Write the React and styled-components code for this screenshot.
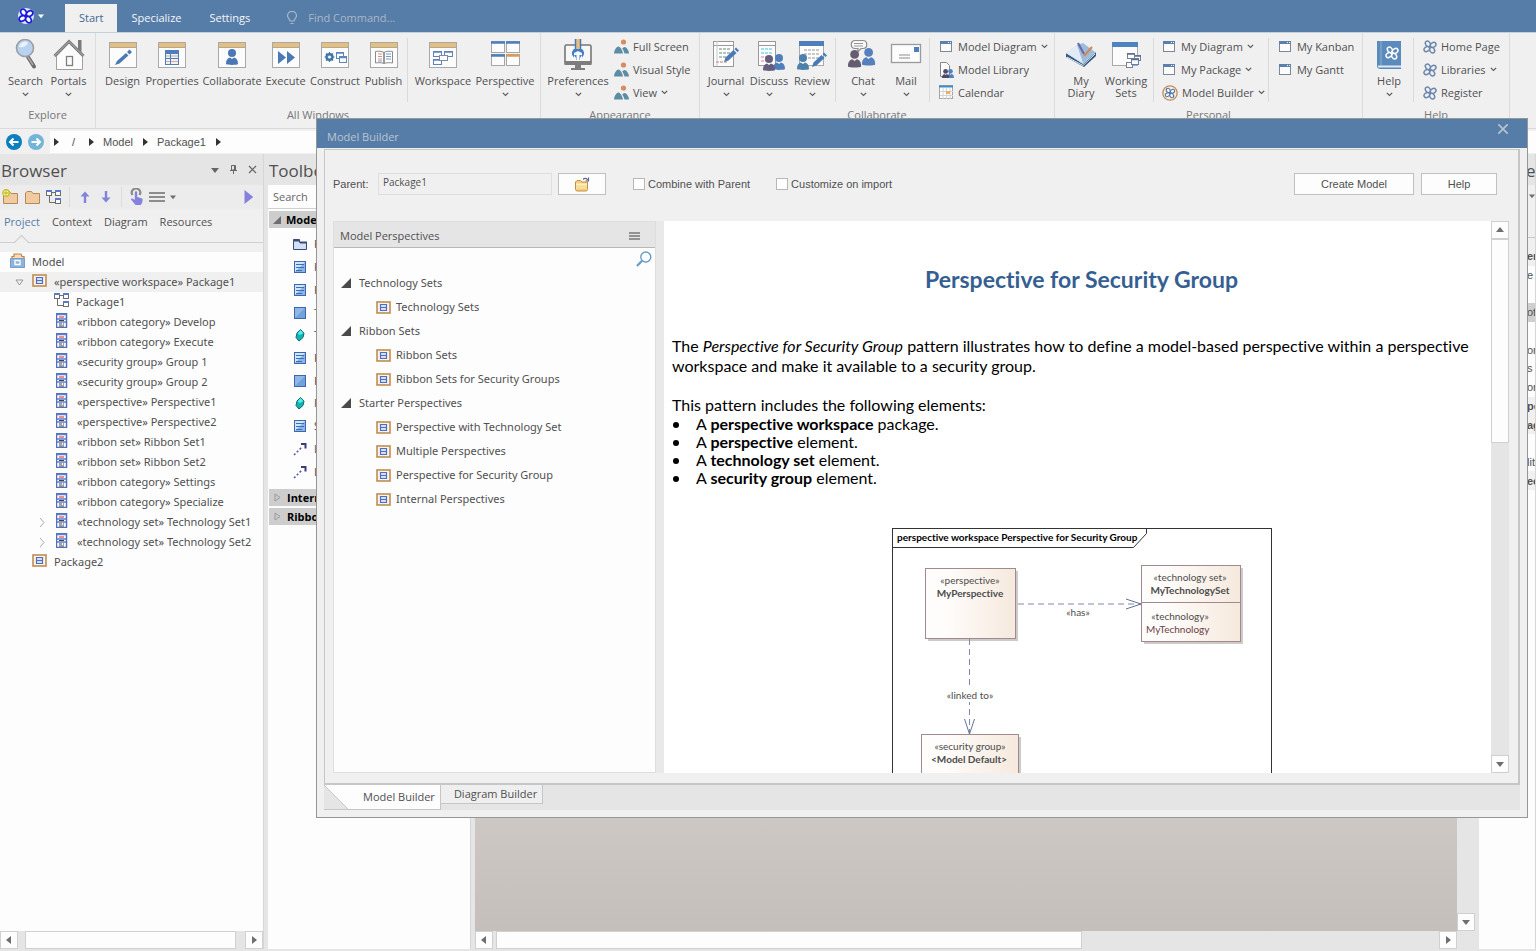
import React, { useState } from "react";
import styled, { createGlobalStyle, css } from "styled-components";

const GlobalStyle = createGlobalStyle`
  * {
    box-sizing: border-box;
  }
  body {
    margin: 0;
    background: #e5e5e5;
    color: #505050;
    font-family: "Open Sans", "Noto Sans", sans-serif;
    font-size: 11px;
    line-height: 14px;
    overflow: hidden;
  }
  button, input {
    font: inherit;
    color: inherit;
    margin: 0;
    padding: 0;
    border: 0;
    border-radius: 0;
    background: transparent;
  }
  button {
    cursor: pointer;
  }
  svg {
    display: block;
    flex: none;
  }
  ul {
    list-style: none;
    margin: 0;
    padding: 0;
  }
  h1, h2, p {
    margin: 0;
  }
`;

const Page = styled.div`
  display: flex;
  flex-direction: column;
  min-height: 100vh;
  white-space: nowrap;
  padding-bottom: 2px;
`;

/* title bar */

const TitleBar = styled.header`
  display: flex;
  align-items: flex-end;
  height: 33px;
  background: #567da7;
  border-bottom: 1px solid #c3d0de;
`;

const AppButton = styled.button`
  display: flex;
  align-items: center;
  gap: 4px;
  width: 65px;
  height: 32px;
  padding-left: 18px;
`;

const MainTab = styled.button`
  height: 28px;
  padding: 0 14px;
  color: #f4f7fa;
  ${({ $active }) =>
    $active &&
    css`
      background: #f0f0f0;
      color: #45688f;
    `}
`;

const MainTabs = styled.nav`
  display: flex;
`;

const FindBox = styled.label`
  display: flex;
  align-items: center;
  gap: 10px;
  height: 28px;
  margin-left: 22px;
`;

const FindInput = styled.input`
  width: 160px;
  outline: none;
  &::placeholder {
    color: #a9b7c7;
    opacity: 1;
  }
`;

/* ribbon */

const Ribbon = styled.div`
  display: flex;
  height: 96px;
  background: #f0f0f0;
  border-bottom: 1px solid #dadada;
`;

const Group = styled.section`
  display: flex;
  flex-direction: column;
  width: ${({ $width }) => $width}px;
  border-right: 1px solid #dcdcdc;
`;

const GroupBody = styled.div`
  display: flex;
  height: 75px;
  padding-left: ${({ $indent }) => $indent}px;
`;

const GroupLabel = styled.div`
  text-align: center;
  color: #777;
`;

const Divider = styled.div`
  width: 1px;
  height: 64px;
  margin: 5px 0 0 ${({ $before = 0 }) => $before}px;
  background: #dadada;
`;

const BigButton = styled.button`
  display: flex;
  flex-direction: column;
  align-items: center;
  width: ${({ $width }) => $width}px;
  padding-top: 6px;
  line-height: 12px;
`;

const BigLabel = styled.span`
  margin: 4px 0 5px;
`;

const SmallColumn = styled.div`
  display: flex;
  flex-direction: column;
  padding: 2px 0 0 ${({ $indent }) => $indent}px;
`;

const SmallButton = styled.button`
  display: flex;
  align-items: center;
  gap: 4px;
  height: 23px;
`;

/* breadcrumb */

const Crumbs = styled.nav`
  display: flex;
  align-items: center;
  gap: 6px;
  height: 25px;
  padding-left: 6px;
  background: #f0f0f0;
`;

const CrumbTrail = styled.div`
  display: flex;
  flex: 1;
  align-items: center;
  gap: 8px;
  height: 22px;
  padding-left: 2px;
  background: #fdfdfd;
  font-family: "Liberation Sans", Arial, sans-serif;
`;

const Crumb = styled.a`
  color: inherit;
  text-decoration: none;
`;

const RootCrumb = styled(Crumb)`
  padding: 0 4px;
`;

/* docked panels */

const Workspace = styled.main`
  display: flex;
  flex: 1;
  gap: 4px;
`;

const Panel = styled.section`
  display: flex;
  flex-direction: column;
  width: ${({ $width }) => $width}px;
  background: #fdfdfd;
  border-right: 1px solid #d6d6d6;
  overflow: hidden;
`;

const PanelHeader = styled.div`
  display: flex;
  align-items: center;
  gap: 10px;
  height: 31px;
  padding-right: 6px;
  background: #e5e5e5;
`;

const PanelTitle = styled.h2`
  flex: 1;
  padding: 2px 0 0 1px;
  font-size: 17px;
  font-weight: 400;
  line-height: 24px;
`;

const Toolbar = styled.div`
  display: flex;
  align-items: center;
  gap: 5px;
  height: 24px;
  padding: 0 8px 0 2px;
  background: #ececec;
`;

const ToolDivider = styled.div`
  width: 1px;
  height: 20px;
  margin: 0 2px;
  background: #dcdcdc;
`;

const Spacer = styled.div`
  flex: 1;
`;

const PanelTabs = styled.div`
  display: flex;
  gap: 12px;
  height: 34px;
  padding: 6px 0 0 4px;
  background: #f0f0f0;
  border-bottom: 1px solid #d0d0d0;
`;

const PanelTab = styled.button`
  position: relative;
  height: 14px;
  color: ${({ $active }) => ($active ? "#567da7" : "#505050")};
  ${({ $active }) =>
    $active &&
    css`
      &::after {
        content: "";
        position: absolute;
        left: 12px;
        top: 22px;
        width: 10px;
        height: 10px;
        border: solid #cacaca;
        border-width: 1px 0 0 1px;
        background: linear-gradient(135deg, #f0f0f0 50%, transparent 50%);
        transform: rotate(45deg);
      }
    `}
`;

const Tree = styled.ul`
  flex: 1;
  border-top: 9px solid #f0f0f0;
  font-family: "Noto Sans", "Open Sans", sans-serif;
`;

const TreeRow = styled.li`
  display: flex;
  align-items: center;
  height: 20px;
  padding-left: ${({ $indent }) => $indent}px;
  background: ${({ $selected }) => ($selected ? "#f0f0f0" : "transparent")};
`;

const TreeArrow = styled.span`
  display: flex;
  align-items: center;
  width: 17px;
`;

const TreeIcon = styled.span`
  width: ${({ $wide }) => ($wide ? 22 : 21)}px;
  padding-bottom: 4px;
`;

/* scroll bars */

const ScrollTrack = styled.div`
  display: flex;
  flex: none;
  background: #e5e5e5;
  ${({ $vertical }) =>
    $vertical
      ? css`
          flex-direction: column;
          width: 18px;
        `
      : css`
          height: 18px;
        `}
`;

const ScrollButton = styled.button`
  display: flex;
  flex: none;
  align-items: center;
  justify-content: center;
  width: 18px;
  height: 18px;
  background: #fdfdfd;
  border: 1px solid #d0d0d0;
`;

const ScrollThumb = styled.div`
  flex: ${({ $size }) => $size};
  background: #fdfdfd;
  border: 1px solid #d0d0d0;
`;

const ScrollGap = styled.div`
  flex: ${({ $size }) => $size};
`;

/* toolbox */

const ToolboxSearch = styled.input`
  height: 24px;
  padding-left: 5px;
  background: #fdfdfd;
  border-bottom: 1px solid #d0d0d0;
  &::placeholder {
    color: #666;
    opacity: 1;
  }
`;

const ToolSection = styled.div`
  display: flex;
  align-items: center;
  gap: 5px;
  height: 17px;
  margin: 2px 0 0 1px;
  padding-left: 4px;
  background: #cdcdcd;
  color: #000;
  font-weight: 700;
`;

const ToolItems = styled.ul`
  display: grid;
  grid-auto-rows: 1fr;
  height: 250px;
  margin: 5px 0 4px;
  padding-left: 25px;
`;

const ToolItem = styled.li`
  display: flex;
  align-items: center;
  gap: 7px;
`;

/* diagram canvas */

const CanvasArea = styled.section`
  display: flex;
  flex: 1;
  flex-direction: column;
`;

const CanvasRow = styled.div`
  display: flex;
  flex: 1;
`;

const Canvas = styled.div`
  flex: 1;
  background: linear-gradient(#fbfaf9, #c5bfbb);
`;

const CanvasScroll = styled(ScrollTrack)`
  padding-right: 18px;
`;

/* element list at the right edge */

const SideHeader = styled(PanelHeader)`
  padding: 0 0 0 46px;
`;

const SideTools = styled.div`
  height: 53px;
  padding: 8px 0 0 50px;
  background: #f0f0f0;
  border-bottom: 1px solid #c8c8c8;
`;

const SideGap = styled.div`
  height: 9px;
  background: #f0f0f0;
`;

const SideRows = styled.ul`
  display: grid;
  grid-auto-rows: 1fr;
  height: 243px;
  font-family: "Liberation Sans", Arial, sans-serif;
`;

const SideRow = styled.li`
  display: flex;
  align-items: center;
  padding-left: 48px;
  background: ${({ $fill = "transparent" }) => $fill};
  font-weight: ${({ $bold }) => ($bold ? 700 : 400)};
`;

/* model builder dialog */

const Dialog = styled.section`
  position: fixed;
  inset: 118px 8px 133px 316px;
  display: flex;
  flex-direction: column;
  background: #f0f0f0;
  border: 1px solid #969696;
`;

const DialogTitle = styled.div`
  display: flex;
  flex: none;
  align-items: flex-start;
  justify-content: space-between;
  height: 29px;
  padding: 4px 18px 0 10px;
  background: #567da7;
`;

const DialogName = styled.h2`
  padding-top: 7px;
  color: #b9c4d1;
  font-size: 11px;
  font-weight: 400;
  line-height: 14px;
`;

const DialogBody = styled.div`
  display: flex;
  flex: 1;
  flex-direction: column;
  min-height: 0;
  margin: 1px 7px 0;
  padding: 23px 9px 10px 8px;
  border: solid #c6c6c6;
  border-width: 1px 2px 2px 1px;
`;

const Form = styled.form`
  display: flex;
  align-items: center;
  height: 22px;
  margin-bottom: 26px;
  font-family: "Liberation Sans", Arial, sans-serif;
`;

const ParentLabel = styled.label`
  width: 45px;
`;

const ParentInput = styled.input`
  width: 174px;
  height: 22px;
  padding: 0 0 4px 4px;
  border: 1px solid #dedede;
  font-family: "Open Sans", sans-serif;
  font-size: 10px;
`;

const FormButton = styled.button`
  display: flex;
  align-items: center;
  justify-content: center;
  width: ${({ $width }) => $width}px;
  height: 22px;
  background: #fdfdfd;
  border: 1px solid #c0c0c0;
`;

const BrowseButton = styled(FormButton)`
  margin: 0 27px 0 6px;
`;

const Check = styled.label`
  display: flex;
  align-items: center;
  gap: 3px;
  margin-right: 26px;
`;

const CheckBox = styled.input`
  appearance: none;
  width: 12px;
  height: 12px;
  background: #fff;
  border: 1px solid #b8b8b8;
  &:checked {
    background: #567da7;
  }
`;

const FormActions = styled.div`
  display: flex;
  gap: 7px;
  margin-left: auto;
  padding-right: 12px;
`;

const Split = styled.div`
  display: flex;
  flex: 1;
  min-height: 0;
`;

const Perspectives = styled.section`
  flex: none;
  width: 323px;
  background: #fdfdfd;
  border: 1px solid #dedede;
`;

const PerspectivesHeader = styled.div`
  display: flex;
  align-items: center;
  justify-content: space-between;
  height: 26px;
  padding: 2px 15px 0 6px;
  background: #e5e5e5;
  border-bottom: 1px solid #b8b8b8;
`;

const PerspectiveSearch = styled.button`
  display: block;
  margin: 3px 3px 4px auto;
`;

const PerspectiveList = styled.ul`
  font-family: "Noto Sans", "Open Sans", sans-serif;
`;

const PerspectiveRow = styled.li`
  display: flex;
  align-items: center;
  gap: ${({ $leaf }) => ($leaf ? 4 : 8)}px;
  height: 24px;
  padding-left: ${({ $leaf }) => ($leaf ? 42 : 7)}px;
`;

const SplitHandle = styled.div`
  width: 8px;
  background: #e9e9e9;
`;

const Doc = styled.article`
  flex: 1;
  min-width: 0;
  padding: 43px 0 0 8px;
  overflow: hidden;
  background: #fff;
  color: #000;
  font-family: Lato, sans-serif;
  font-size: 16px;
  font-variant-ligatures: none;
  line-height: 20px;
  white-space: normal;
`;

const DocTitle = styled.h1`
  margin-bottom: 42px;
  color: #365f91;
  font-size: 23px;
  font-weight: 700;
  line-height: 30px;
  text-align: center;
`;

const Paragraph = styled.p`
  padding-right: 8px;
  margin-bottom: 19px;
`;

const BulletLead = styled.p`
  line-height: 20px;
`;

const Bullets = styled.ul`
  margin-bottom: 41px;
  line-height: 18px;
`;

const Bullet = styled.li`
  display: flex;
  &::before {
    content: "";
    width: 6px;
    height: 6px;
    margin: 7px 17px 0 1px;
    border-radius: 50%;
    background: #000;
  }
`;

const DiagramFrame = styled.div`
  display: flex;
  justify-content: center;
`;

const TabStrip = styled.div`
  display: flex;
  flex: none;
  align-items: flex-start;
  height: 25px;
  margin: 0 7px 7px;
  background: #e5e5e5;
`;

const ActiveTab = styled.button`
  display: flex;
  height: 25px;
  padding-right: 5px;
  align-items: center;
  background: #fdfdfd;
  border: solid #c6c6c6;
  border-width: 0 1px 1px 0;
  &::before {
    content: "";
    width: 24px;
    height: 24px;
    margin-right: 15px;
    background: linear-gradient(45deg, #e5e5e5 49%, #c6c6c6 49% 52%, #fdfdfd 52%);
  }
`;

const OtherTab = styled.button`
  height: 19px;
  padding: 0 5px 0 13px;
  border: solid #c6c6c6;
  border-width: 0 1px 1px 0;
  background: #efefef;
`;

/* icons */

const Triangle = ({ dir = "down", color = "#6e6e6e", size = 8 }) => {
  const shapes = {
    down: "M0 2h8L4 7z",
    up: "M0 6h8L4 1z",
    left: "M6 0v8L1 4z",
    right: "M2 0v8l5-4z",
    corner: "M8 0v8H0z",
  };
  return (
    <svg width={size} height={size} viewBox="0 0 8 8">
      <path d={shapes[dir]} fill={color} />
    </svg>
  );
};

const HollowTriangle = ({ dir = "right" }) => (
  <svg width="9" height="9" viewBox="0 0 9 9" fill="none" stroke="#999">
    <path d={dir === "down" ? "M1 2h7L4.500 7z" : "M2 1v7l5-3.500z"} />
  </svg>
);

const Chevron = () => (
  <svg width="7" height="5" viewBox="0 0 7 5" fill="none" stroke="#5c5c5c" strokeWidth="1.200">
    <path d="M.8.8l2.700 2.700L6.200.8" />
  </svg>
);

const ChevronRight = () => (
  <svg width="7" height="11" viewBox="0 0 7 11" fill="none" stroke="#aaa">
    <path d="M1 1l4 4.500L1 10" />
  </svg>
);

const Knot = ({ size = 14, back = "none", color = "#6c87ad", hole = "#f0f0f0" }) => (
  <svg width={size} height={size} viewBox="0 0 16 16">
    <circle cx="8" cy="8" r="8" fill={back} />
    <g fill={hole} stroke={color} strokeWidth="1.700">
      <ellipse cx="5.600" cy="4.400" rx="3.400" ry="2.600" transform="rotate(56 5.600 4.400)" />
      <ellipse cx="11.600" cy="5.600" rx="3.400" ry="2.600" transform="rotate(146 11.600 5.600)" />
      <ellipse cx="10.400" cy="11.600" rx="3.400" ry="2.600" transform="rotate(56 10.400 11.600)" />
      <ellipse cx="4.400" cy="10.400" rx="3.400" ry="2.600" transform="rotate(146 4.400 10.400)" />
    </g>
    <circle cx="8" cy="8" r="1.500" fill={color} />
  </svg>
);

const Big = ({ children }) => (
  <svg width="32" height="32" viewBox="0 0 32 32" fill="none">
    {children}
  </svg>
);

const WindowIcon = ({ children }) => (
  <Big>
    <rect x="2.500" y="3.500" width="27" height="25" fill="#fcfcfc" stroke="#a9a9a9" />
    <rect x="3" y="4" width="26" height="4" fill="#e3c081" />
    <path d="M3 8.500h26" stroke="#b9a98a" />
    {children}
  </Big>
);

const Person = ({ x = 0, y = 0, color = "#4a78b5" }) => (
  <g transform={`translate(${x} ${y})`} fill={color}>
    <circle cx="6" cy="4" r="4" />
    <path d="M0 15c0-4 1.500-6 4-6.500l2 1.500 2-1.500c2.500.5 4 2.500 4 6.500-1 1.200-11 1.200-12 0z" />
  </g>
);

const Pen = ({ x = 0, y = 0 }) => (
  <g transform={`translate(${x} ${y})`}>
    <path d="M0 15l1.500-4.500L9.500 3l3 3-8 7.500z" fill="#4a7ab5" />
    <path d="M10.500 2l1.500-1.500 3 3L13.500 5z" fill="#4a7ab5" />
  </g>
);

const SearchIcon = () => (
  <Big>
    <path d="M18 18l6 9.500" stroke="#6c6c6c" strokeWidth="4" strokeLinecap="round" />
    <path d="M18 18l5 8" stroke="#a8a8a8" strokeWidth="1.500" />
    <circle cx="15" cy="9" r="8.500" fill="#b9d2f0" stroke="#9a9fa6" strokeWidth="1.600" />
    <path d="M9 8a6.500 6.500 0 0 1 9-5c-1 4-4 6-9 5z" fill="#e9f2fc" />
  </Big>
);

const HomeIcon = () => (
  <Big>
    <path d="M3.500 17v13.500h26V17L16 4z" fill="#fcfcfc" stroke="#a0a0a0" />
    <path d="M25 1h3.500v12L25 10z" fill="#7a7a7a" />
    <path d="M1.500 17L16 2.500 30.500 17" stroke="#787878" strokeWidth="3" />
    <path d="M1.500 17L16 2.500 30.500 17" stroke="#b5b5b5" />
    <rect x="13.500" y="17.500" width="6" height="9" fill="#fcfcfc" stroke="#808080" strokeWidth="1.300" />
  </Big>
);

const DesignIcon = () => (
  <WindowIcon>
    <path d="M8 26l2-4 9-8 2.500 2.500-9 8zM20 13l2.500-2.500 2.500 2.500-2.500 2.500z" fill="#4a7ab5" />
  </WindowIcon>
);

const PropertiesIcon = () => (
  <WindowIcon>
    <rect x="9" y="11" width="14" height="15" fill="#4f7fbb" />
    <path d="M10 15h4v4h-4zM15 15h7v4h-7zM10 20h4v5h-4zM15 20h7v5h-7z" fill="#f5f0f0" />
    <path d="M15 17h7M10 17h4M10 22.500h4" stroke="#a9b4bf" />
    <path d="M15 22.500h7" stroke="#d8a9a0" />
  </WindowIcon>
);

const CollaborateIcon = () => (
  <WindowIcon>
    <Person x={10} y={10} />
  </WindowIcon>
);

const ExecuteIcon = () => (
  <WindowIcon>
    <path d="M8 12v13l8-6.500zM17 12v13l8-6.500z" fill="#4a7ab5" />
  </WindowIcon>
);

const ConstructIcon = () => (
  <WindowIcon>
    <circle cx="10.500" cy="18" r="3" stroke="#3f76a8" strokeWidth="2.200" />
    <path d="M10.500 13v10M5.500 18h10M7 14.500l7 7M14 14.500l-7 7" stroke="#3f76a8" strokeWidth="1.200" />
    <circle cx="10.500" cy="18" r="1.500" fill="#fcfcfc" />
    <rect x="17.500" y="13.500" width="7" height="6" fill="#fff" stroke="#5f86b8" />
    <rect x="20.500" y="17.500" width="7" height="6" fill="#fff" stroke="#5f86b8" />
    <path d="M17 14h8M20 18.500h8" stroke="#5f86b8" strokeWidth="1.500" />
  </WindowIcon>
);

const PublishIcon = () => (
  <WindowIcon>
    <path d="M7.500 12.500c3-.5 6-.5 8.500 1 2.500-1.500 5.500-1.500 8.500-1v11.500c-3-.5-6-.5-8.500.5-2.500-1-5.500-1-8.500-.5z" fill="#fff" stroke="#8b8b8b" />
    <path d="M16 13.500V24" stroke="#777" strokeWidth="1.500" />
    <path d="M10 15h4M10 17.500h4M10 20h4" stroke="#d88c7d" />
    <path d="M18 15h5M18 17.500h5M18 20h5M10 22h4" stroke="#6f9cd2" />
  </WindowIcon>
);

const WorkspaceIcon = () => (
  <WindowIcon>
    <g fill="#fff" stroke="#5c84bb">
      <rect x="6.500" y="12.500" width="8" height="5" />
      <rect x="17.500" y="12.500" width="8" height="5" />
      <rect x="6.500" y="20.500" width="8" height="5" />
      <rect x="12.500" y="16.500" width="8" height="5" stroke="#808aa0" />
    </g>
    <path d="M6 13h9M17 13h9M6 21h6" stroke="#5c84bb" strokeWidth="1.500" />
  </WindowIcon>
);

const PerspectiveIcon = () => (
  <Big>
    <g fill="#fcfcfc" stroke="#a6a6a6">
      <rect x="2.500" y="2.500" width="13" height="11" />
      <rect x="17.500" y="2.500" width="13" height="11" />
      <rect x="2.500" y="15.500" width="13" height="11" />
      <rect x="17.500" y="15.500" width="13" height="11" />
    </g>
    <path d="M2 3.500h14M17 3.500h14M2 16.500h14" stroke="#4f7fbb" strokeWidth="2.500" />
    <path d="M17 16.500h14" stroke="#d99a60" strokeWidth="2.500" />
  </Big>
);

const PreferencesIcon = () => (
  <Big>
    <rect x="3" y="6" width="26" height="19" rx="1.500" fill="#f7f7f7" stroke="#777" strokeWidth="1.600" />
    <path d="M2.500 22h27v4h-27zM13 26h6v3h4v2H9v-2h4z" fill="#7d7d7d" />
    <path d="M14 0h4v10h-4z" fill="#e3c081" />
    <path d="M13.500 0v12M18.500 0v12" stroke="#4a7ab5" strokeWidth="1.500" />
    <path d="M12 10h8c3 3 2.500 6 0 8.500v-4.500l-4-2-4 2v4.500c-2.500-2.500-3-5.500 0-8.500z" fill="#3f7fc6" />
    <path d="M12 16h8l-2 3v2h-4v-2z" fill="#3f7fc6" />
    <path d="M14.500 22v-7h3v7z" fill="#fbfbfb" />
  </Big>
);

const PictureIcon = () => (
  <svg width="15" height="15" viewBox="0 0 15 15">
    <circle cx="9.500" cy="3" r="2.600" fill="#d58d61" />
    <path d="M0 14.500c0-3 2.300-7 4.300-7s3.700 3 4.700 7z" fill="#5d8da6" />
    <path d="M8.200 9.500C9 8.500 9.800 8 10.500 8c2 0 4.500 3.500 4.500 6.500h-4.500c-.5-2-1.300-3.700-2.300-5z" fill="#5d8da6" />
  </svg>
);

const Lines = ({ x, y, w, colors, step = 4 }) =>
  colors.map((c, i) => (
    <path key={i} d={`M${x} ${y + i * step}h${w}`} stroke={c} strokeWidth="1.500" strokeDasharray="3 1" />
  ));

const JournalIcon = () => (
  <Big>
    <rect x="3.500" y="2.500" width="20" height="25" fill="#fcfcfc" stroke="#999" />
    <path d="M4 6.500h19" stroke="#999" />
    <path d="M7 2v25" stroke="#c9c9c9" />
    <Lines x={9} y={10} w={11} colors={["#9ab0a4", "#9ab0a4", "#9ab0a4"]} />
    <Lines x={6} y={23} w={12} colors={["#d6a49c"]} />
    <Pen x={14} y={8} />
  </Big>
);

const DiscussIcon = () => (
  <Big>
    <rect x="5.500" y="2.500" width="17" height="24" fill="#fcfcfc" stroke="#999" />
    <path d="M6 6.500h16" stroke="#999" />
    <Lines x={8} y={10} w={12} colors={["#7bdcea", "#7bdcea"]} />
    <Lines x={8} y={18} w={5} colors={["#e6a7cd", "#e6a7cd"]} />
    <Person x={20} y={15} color="#4f7fbb" />
    <Person x={10} y={16} color="#665c7d" />
  </Big>
);

const ReviewIcon = () => (
  <Big>
    <rect x="3.500" y="2.500" width="24" height="24" fill="#fcfcfc" stroke="#aaa" />
    <path d="M3 4.500h25" stroke="#4f7fbb" strokeWidth="5" />
    <Lines x={8} y={11} w={16} colors={["#b8b8b8", "#b8b8b8", "#b8b8b8"]} />
    <Person x={1} y={15} color="#4d80ab" />
    <Pen x={16} y={13} />
  </Big>
);

const ChatIcon = () => (
  <Big>
    <path d="M8 1.500h8c5 0 5 8 0 8h-2l-3 3v-3H8c-5 0-5-8 0-8z" fill="#f7f7f7" stroke="#8e8e8e" strokeWidth="1.200" />
    <path d="M7 4.500h9M7 7h9" stroke="#999" />
    <g transform="translate(1 11) scale(1.100)">
      <Person color="#665c70" />
    </g>
    <g transform="translate(15 9) scale(1.100)">
      <Person color="#567fbd" />
    </g>
  </Big>
);

const MailIcon = () => (
  <Big>
    <rect x="1.500" y="5.500" width="29" height="18" fill="#fcfcfc" stroke="#9a9a9a" strokeWidth="1.300" />
    <rect x="24" y="8" width="5" height="5" fill="#4f7fbb" />
    <path d="M9 16h11M9 19h11" stroke="#8d8d8d" />
  </Big>
);

const DiaryIcon = () => (
  <Big>
    <path d="M1 14l17 11 13-12v4L19 28 1 18z" fill="#37597f" />
    <path d="M2 18l16 8.500L30 15" stroke="#dce8f4" />
    <path d="M1 14l10-7 5 4 15 2-13 12z" fill="#b7cfe6" />
    <path d="M1 14l11-8 7 8-1 10z" fill="#e2ecf6" />
    <path d="M12 6l6-2 12 9-12 11z" fill="#9dbbdb" />
    <path d="M13 4l6 11" stroke="#6e65a5" strokeWidth="2" />
    <path d="M27 8l-8 9" stroke="#d08a58" strokeWidth="2.200" />
  </Big>
);

const WorkingSetsIcon = () => (
  <Big>
    <rect x="2.500" y="3.500" width="25" height="23" fill="#fcfcfc" stroke="#aaa" />
    <path d="M2 5.500h26" stroke="#4f83bf" strokeWidth="5" />
    <g fill="#fff" stroke="#7d7d90">
      <rect x="17.500" y="14.500" width="7" height="5" />
      <rect x="24.500" y="16.500" width="6" height="5" />
      <rect x="16.500" y="23.500" width="6" height="5" />
      <rect x="21.500" y="19.500" width="7" height="6" stroke="#5c84bb" />
    </g>
    <path d="M17 15h8M25 17h6M21 20.500h8" stroke="#5c6c94" strokeWidth="1.500" />
  </Big>
);

const HelpIcon = () => (
  <Big>
    <path d="M4 2h24v28H8c-3 0-4-1-4-3z" fill="#5b8abc" />
    <path d="M8 2v25" stroke="#8fb0d4" />
    <path d="M5 27.500h23" stroke="#dfeaf5" strokeWidth="2" />
    <g transform="translate(12 7)">
      <Knot size={14} color="#fff" hole="#5b8abc" />
    </g>
  </Big>
);

const SmallWindow = () => (
  <svg width="15" height="15" viewBox="0 0 15 15">
    <rect x="1.500" y="2.500" width="11" height="10" fill="#fcfcfc" stroke="#7e8796" />
    <path d="M1 3.500h12" stroke="#5c80ae" strokeWidth="3" />
    <path d="M9 3.500h1M11 3.500h1" stroke="#fff" />
  </svg>
);

const LibraryIcon = () => (
  <svg width="15" height="16" viewBox="0 0 15 16">
    <path d="M1.500.5h6l3 3v11h-9z" fill="#fcfcfc" stroke="#888" />
    <g transform="translate(8 7) scale(.58)">
      <Person color="#567fbd" />
    </g>
    <g transform="translate(3 7) scale(.6)">
      <Person color="#4f4a68" />
    </g>
  </svg>
);

const CalendarIcon = () => (
  <svg width="15" height="15" viewBox="0 0 15 15">
    <rect x=".5" y=".5" width="13" height="13" fill="#fdfdfd" stroke="#a5a5a5" />
    <path d="M0 1.500h14" stroke="#3b8fc4" strokeWidth="2" />
    <path d="M4 3v11M7.500 3v11M11 3v11M1 6.500h13M1 10.500h13" stroke="#d0d5da" />
    <rect x="7" y="6" width="4" height="3" fill="#f3ad62" />
  </svg>
);

const BuilderIcon = () => (
  <svg width="16" height="16" viewBox="0 0 16 16">
    <circle cx="8" cy="8" r="7.200" fill="#f7e9d6" stroke="#bf8f5a" strokeWidth="1.300" />
    <g transform="translate(2.500 2.500)">
      <Knot size={11} color="#4f78ae" hole="#f7f7f7" />
    </g>
  </svg>
);

const Bulb = () => (
  <svg width="12" height="14" viewBox="0 0 12 14" fill="none" stroke="#a9b7c7" strokeWidth="1.200">
    <path d="M4 10C4 8 1.500 7 1.500 4.800a4.400 4.400 0 0 1 9 0C10.500 7 8 8 8 10zM4.500 12.500h3" />
  </svg>
);

const RoundArrow = ({ dir, color }) => (
  <svg width="16" height="16" viewBox="0 0 16 16">
    <circle cx="8" cy="8" r="8" fill={color} />
    <g fill="none" stroke="#fff" strokeWidth="2" transform={dir === "right" ? "rotate(180 8 8)" : undefined}>
      <path d="M12.500 8H4.500M7.500 4.500L4 8l3.500 3.500" />
    </g>
  </svg>
);

const Pin = () => (
  <svg width="9" height="9" viewBox="0 0 9 9" fill="none" stroke="#666">
    <path d="M2.500.5h4v4.500h-4zM1 5.500h7M4.500 5.500V9M5.500 1v4" />
  </svg>
);

const Cross = ({ size = 9, color = "#666" }) => (
  <svg width={size} height={size} viewBox="0 0 9 9" stroke={color} strokeWidth="1.200">
    <path d="M1 1l7 7M8 1L1 8" />
  </svg>
);

const Folder = ({ isNew }) => (
  <svg width="17" height="16" viewBox="0 0 17 16">
    <path d="M1.500 14.500V4L3 2.500h4.500L9 4.500h6.500v10z" fill="#f0cba0" stroke="#b98955" />
    {isNew && (
      <g>
        <circle cx="4" cy="4" r="3.200" fill="#fff" stroke="#c9bf1f" strokeWidth="1.400" />
        <path d="M4 1.500v5M1.500 4h5" stroke="#c9bf1f" strokeWidth="1.300" />
      </g>
    )}
  </svg>
);

const StructureIcon = () => (
  <svg width="16" height="16" viewBox="0 0 16 16" fill="#fcfcfc" stroke="#6d6d6d">
    <path d="M3.500 6v7.500h6M6 3.500h4" fill="none" />
    <rect x=".5" y="1.500" width="5" height="5" />
    <rect x="9.500" y="1.500" width="5" height="5" />
    <rect x="9.500" y="9.500" width="5" height="5" />
    <path d="M0 2h6M9 2h6M9 10h6" stroke="#5c78c8" strokeWidth="2" />
  </svg>
);

const MoveArrow = ({ down }) => (
  <svg width="16" height="16" viewBox="0 0 16 16">
    <g transform={down ? "rotate(180 8 8)" : undefined}>
      <path d="M8 2.500l4.500 5H9.200V14H6.800V7.500H3.500z" fill="#8482dc" />
    </g>
  </svg>
);

const TouchIcon = () => (
  <svg width="15" height="18" viewBox="0 0 15 18">
    <path d="M3.500 7a4.200 4.200 0 1 1 7 0" fill="none" stroke="#8a8a8a" strokeWidth="2.200" />
    <path d="M5.800 4.500c0-1.800 2.400-1.800 2.400 0V9l5 1.500c1 .5 0 6-1.700 6.500H6.500L2 11.500c0-1.500 1.500-1.500 3.800.5z" fill="#8482dc" />
  </svg>
);

const MenuIcon = ({ width = 16, color = "#6e6e6e" }) => (
  <svg width={width} height="12" viewBox={`0 0 ${width} 12`} stroke={color} strokeWidth="1.600">
    <path
      d={width > 12 ? `M0 2h${width}M0 6h${width}M0 10h${width}` : `M0 3h${width}M0 6h${width}M0 9h${width}`}
    />
  </svg>
);

const ModelIcon = () => (
  <svg width="16" height="15" viewBox="0 0 16 15">
    <path d="M2 6V3.500h2V1h7l1 2.500h2V6" fill="#f7dcbc" stroke="#bd8446" strokeWidth="1.200" />
    <path d="M.5 5.500h14v9H.5z" fill="#8db4dd" stroke="#7b9cc3" />
    <path d="M5 7.500h5v4H5z" fill="none" stroke="#fff" strokeWidth="1.300" />
  </svg>
);

const PackageIcon = () => (
  <svg width="16" height="13" viewBox="0 0 16 13">
    <rect x="1" y="1" width="13" height="11" fill="#faf4ec" stroke="#c08d51" strokeWidth="1.600" />
    <path d="M4.500 3.500h6v6h-6zM4.500 6.500h6" fill="#d6e0f8" stroke="#4f6fc0" strokeWidth="1.200" />
  </svg>
);

const ElementIcon = () => (
  <svg width="12" height="15" viewBox="0 0 12 15">
    <rect x=".5" y=".5" width="10" height="14" fill="#fff" stroke="#5270bd" strokeWidth="1.500" />
    <path d="M1 1.500h9M1 6h9M1 9h9" stroke="#5e7ed0" strokeWidth="1.500" />
    <path d="M3 4h5" stroke="#e35f5f" strokeWidth="1.400" />
    <path d="M3 7.500h5M3 11h3M7 11h1M3 13h5" stroke="#444" strokeWidth="1.200" />
  </svg>
);

const ToolElementIcon = ({ kind }) => (
  <svg width="14" height="14" viewBox="0 0 14 14">
    {kind === "package" && (
      <g>
        <path d="M.5 2.500h6v3h7v7H.5z" fill="#cfe0f8" stroke="#3d4a73" />
        <path d="M1 3.500h5M7 5.500h7" stroke="#3d4a73" strokeWidth="2" />
      </g>
    )}
    {(kind === "list" || kind === "plain") && (
      <g>
        <rect x="1.500" y="1.500" width="11" height="11" fill={kind === "list" ? "#cfe6fb" : "#8fb8e8"} stroke="#3f66ad" />
        <path d="M12 2v10H2z" fill="#5e93d6" opacity=".6" />
        {kind === "list" && <path d="M3 4.500h8M3 7.500h8M3 10.500h6" stroke="#3a6fc0" />}
      </g>
    )}
    {kind === "gem" && (
      <g>
        <path d="M7.500 1.500L11 5 10 9.500 6 13 3 9.500 4 5z" fill="#14b3b3" stroke="#11666c" />
        <path d="M7.500 2L4.500 5.500l2.500 1.500 3.500-2z" fill="#4ff0ea" />
      </g>
    )}
    {kind === "link" && (
      <g>
        <path d="M1 13L9 5" stroke="#5a5aa8" strokeWidth="1.600" strokeDasharray="2 2" />
        <path d="M8 2h4.500v4.500" fill="none" stroke="#3c3c78" strokeWidth="2" />
      </g>
    )}
  </svg>
);

const OpenFolder = () => (
  <svg width="16" height="15" viewBox="0 0 16 15">
    <path d="M1.500 12.500V5L3 3.500h3.500L8 5h5.500v7.500l-1 1.500h-10z" fill="#f3cf7d" stroke="#c09240" />
    <path d="M2 7.500h11" stroke="#fff0c4" strokeWidth="2" />
    <path d="M2 10.500h11" stroke="#f9dd98" strokeWidth="3" />
    <path d="M9 2.500c1.500-1.500 3.500-1.500 4.500.5M14.500.5v3.500H11.500" fill="none" stroke="#5b6786" strokeWidth="1.200" />
  </svg>
);

const Magnifier = () => (
  <svg width="16" height="16" viewBox="0 0 16 16" fill="none" stroke="#6a9bc7">
    <circle cx="9.800" cy="6" r="5" strokeWidth="1.400" />
    <path d="M6 9.800l-5 5.200" strokeWidth="2.200" />
  </svg>
);

/* data */

const ribbon = [
  {
    label: "Explore",
    width: 96,
    indent: 4,
    items: [
      { big: "Search", icon: <SearchIcon />, width: 43, menu: true },
      { big: "Portals", icon: <HomeIcon />, width: 43, menu: true },
    ],
  },
  {
    label: "All Windows",
    width: 445,
    indent: 8,
    items: [
      { big: "Design", icon: <DesignIcon />, width: 37 },
      { big: "Properties", icon: <PropertiesIcon />, width: 62 },
      { big: "Collaborate", icon: <CollaborateIcon />, width: 58 },
      { big: "Execute", icon: <ExecuteIcon />, width: 49 },
      { big: "Construct", icon: <ConstructIcon />, width: 50 },
      { big: "Publish", icon: <PublishIcon />, width: 47 },
      { divider: 0 },
      { big: "Workspace", icon: <WorkspaceIcon />, width: 70 },
      { big: "Perspective", icon: <PerspectiveIcon />, width: 54, menu: true },
    ],
  },
  {
    label: "Appearance",
    width: 159,
    indent: 8,
    items: [
      { big: "Preferences", icon: <PreferencesIcon />, width: 58, menu: true },
      {
        indent: 7,
        small: [
          { text: "Full Screen", icon: <PictureIcon /> },
          { text: "Visual Style", icon: <PictureIcon /> },
          { text: "View", icon: <PictureIcon />, menu: true },
        ],
      },
    ],
  },
  {
    label: "Collaborate",
    width: 355,
    indent: 5,
    items: [
      { big: "Journal", icon: <JournalIcon />, width: 42, menu: true },
      { big: "Discuss", icon: <DiscussIcon />, width: 44, menu: true },
      { big: "Review", icon: <ReviewIcon />, width: 42, menu: true },
      { divider: 2 },
      { big: "Chat", icon: <ChatIcon />, width: 54, menu: true },
      { big: "Mail", icon: <MailIcon />, width: 32, menu: true },
      { divider: 7 },
      {
        indent: 9,
        small: [
          { text: "Model Diagram", icon: <SmallWindow />, menu: true },
          { text: "Model Library", icon: <LibraryIcon /> },
          { text: "Calendar", icon: <CalendarIcon /> },
        ],
      },
    ],
  },
  {
    label: "Personal",
    width: 308,
    indent: 5,
    items: [
      { big: "My\nDiary", icon: <DiaryIcon />, width: 42 },
      { big: "Working\nSets", icon: <WorkingSetsIcon />, width: 48 },
      { divider: 3 },
      {
        indent: 8,
        small: [
          { text: "My Diagram", icon: <SmallWindow />, menu: true },
          { text: "My Package", icon: <SmallWindow />, menu: true },
          { text: "Model Builder", icon: <BuilderIcon />, menu: true },
        ],
      },
      { divider: 3 },
      {
        indent: 9,
        small: [
          { text: "My Kanban", icon: <SmallWindow /> },
          { text: "My Gantt", icon: <SmallWindow /> },
        ],
      },
    ],
  },
  {
    label: "Help",
    width: 147,
    indent: 5,
    items: [
      { big: "Help", icon: <HelpIcon />, width: 42, menu: true },
      { divider: 3 },
      {
        indent: 9,
        small: [
          { text: "Home Page", icon: <Knot /> },
          { text: "Libraries", icon: <Knot />, menu: true },
          { text: "Register", icon: <Knot /> },
        ],
      },
    ],
  },
];

const elements = [
  ["«ribbon category» Develop"],
  ["«ribbon category» Execute"],
  ["«security group» Group 1"],
  ["«security group» Group 2"],
  ["«perspective» Perspective1"],
  ["«perspective» Perspective2"],
  ["«ribbon set» Ribbon Set1"],
  ["«ribbon set» Ribbon Set2"],
  ["«ribbon category» Settings"],
  ["«ribbon category» Specialize"],
  ["«technology set» Technology Set1", true],
  ["«technology set» Technology Set2", true],
];

const tools = [
  ["package", "P"],
  ["list", "P"],
  ["list", "P"],
  ["plain", "T"],
  ["gem", "T"],
  ["list", "R"],
  ["plain", "R"],
  ["gem", "R"],
  ["list", "S"],
  ["link", "L"],
  ["link", "L"],
];

const sideRows = [
  { text: "era", bold: true, fill: "#f0f0f0" },
  { text: "e" },
  { text: "" },
  { text: "ot", fill: "#cfcfcf" },
  { text: "" },
  { text: "or" },
  { text: "s" },
  { text: "or" },
  { text: "pe", bold: true, fill: "#f0f0f0" },
  { text: "ag", bold: true, fill: "#f0f0f0" },
  { text: "" },
  { text: "lit" },
  { text: "ec", bold: true, fill: "#f0f0f0" },
];

const perspectives = [
  { name: "Technology Sets", items: ["Technology Sets"] },
  { name: "Ribbon Sets", items: ["Ribbon Sets", "Ribbon Sets for Security Groups"] },
  {
    name: "Starter Perspectives",
    items: [
      "Perspective with Technology Set",
      "Multiple Perspectives",
      "Perspective for Security Group",
      "Internal Perspectives",
    ],
  },
];

/* pieces */

const RibbonItem = ({ item }) => {
  if (item.divider !== undefined) return <Divider $before={item.divider} />;
  if (item.small) {
    return (
      <SmallColumn $indent={item.indent}>
        {item.small.map((s) => (
          <SmallButton key={s.text}>
            {s.icon}
            {s.text}
            {s.menu && <Chevron />}
          </SmallButton>
        ))}
      </SmallColumn>
    );
  }
  return (
    <BigButton $width={item.width}>
      {item.icon}
      <BigLabel>
        {item.big.split("\n").map((line) => (
          <div key={line}>{line}</div>
        ))}
      </BigLabel>
      {item.menu && <Chevron />}
    </BigButton>
  );
};

const PatternDiagram = () => (
  <svg width="380" height="252" viewBox="0 0 380 252" fontFamily="Lato, sans-serif" fontSize="10" fill="#4c4c4c">
    <defs>
      <linearGradient id="nodeFill">
        <stop offset="0.200" stopColor="#fffdfc" />
        <stop offset="1" stopColor="#f6e9dd" />
      </linearGradient>
    </defs>
    <rect x=".5" y=".5" width="379" height="260" fill="#fff" stroke="#333" />
    <path d="M.5 19.500h241l13-14v-5" fill="none" stroke="#333" />
    <text x="5" y="13" fontWeight="700" fill="#000">
      perspective workspace Perspective for Security Group
    </text>
    <g fill="#cfcaca">
      <rect x="36" y="43" width="90" height="70" />
      <rect x="252" y="40" width="99" height="76" />
      <rect x="32" y="209" width="97" height="60" />
    </g>
    <g fill="url(#nodeFill)" stroke="#a08a8e">
      <rect x="33.500" y="40.500" width="90" height="70" />
      <rect x="249.500" y="37.500" width="99" height="76" />
      <rect x="29.500" y="206.500" width="97" height="60" />
      <path d="M250 74.500h98" />
    </g>
    <g fill="none" stroke="#7f8aab">
      <path d="M126 76h123M77.500 111v95" strokeDasharray="6 4" />
      <path d="M234 71l15 5-15 5M72.500 191l5 15 5-15" stroke="#66719a" />
    </g>
    <rect x="54" y="161" width="48" height="13" fill="#fff" />
    <g textAnchor="middle">
      <text x="78" y="56">«perspective»</text>
      <text x="78" y="69" fontWeight="700">MyPerspective</text>
      <text x="186" y="88">«has»</text>
      <text x="298" y="53">«technology set»</text>
      <text x="298" y="66" fontWeight="700">MyTechnologySet</text>
      <text x="288" y="92">«technology»</text>
      <text x="78" y="171">«linked to»</text>
      <text x="78" y="222">«security group»</text>
      <text x="77" y="235" fontWeight="700">&lt;Model Default&gt;</text>
    </g>
    <text x="254" y="105" fill="#6d3f45">MyTechnology</text>
  </svg>
);

const ModelBuilderDialog = () => {
  const [parent, setParent] = useState("Package1");

  return (
    <Dialog role="dialog" aria-label="Model Builder">
      <DialogTitle>
        <DialogName>Model Builder</DialogName>
        <button aria-label="Close">
          <Cross size={12} color="#b9c4d1" />
        </button>
      </DialogTitle>
      <DialogBody>
        <Form onSubmit={(e) => e.preventDefault()}>
          <ParentLabel htmlFor="parent">Parent:</ParentLabel>
          <ParentInput id="parent" value={parent} onChange={(e) => setParent(e.target.value)} />
          <BrowseButton type="button" $width={48} aria-label="Browse">
            <OpenFolder />
          </BrowseButton>
          <Check>
            <CheckBox type="checkbox" />
            Combine with Parent
          </Check>
          <Check>
            <CheckBox type="checkbox" />
            Customize on import
          </Check>
          <FormActions>
            <FormButton $width={120}>Create Model</FormButton>
            <FormButton type="button" $width={76}>
              Help
            </FormButton>
          </FormActions>
        </Form>
        <Split>
          <Perspectives>
            <PerspectivesHeader>
              Model Perspectives
              <MenuIcon width={11} color="#777" />
            </PerspectivesHeader>
            <PerspectiveSearch aria-label="Search patterns">
              <Magnifier />
            </PerspectiveSearch>
            <PerspectiveList>
              {perspectives.map((group) => (
                <React.Fragment key={group.name}>
                  <PerspectiveRow>
                    <Triangle dir="corner" color="#4a4a4a" size={10} />
                    {group.name}
                  </PerspectiveRow>
                  {group.items.map((name) => (
                    <PerspectiveRow key={name} $leaf>
                      <PackageIcon />
                      {name}
                    </PerspectiveRow>
                  ))}
                </React.Fragment>
              ))}
            </PerspectiveList>
          </Perspectives>
          <SplitHandle />
          <Doc>
            <DocTitle>Perspective for Security Group</DocTitle>
            <Paragraph>
              The <em>Perspective for Security Group</em> pattern illustrates how to define a model-based
              perspective within a perspective workspace and make it available to a security group.
            </Paragraph>
            <BulletLead>This pattern includes the following elements:</BulletLead>
            <Bullets>
              <Bullet>
                <span>A <b>perspective workspace</b> package.</span>
              </Bullet>
              <Bullet>
                <span>A <b>perspective</b> element.</span>
              </Bullet>
              <Bullet>
                <span>A <b>technology set</b> element.</span>
              </Bullet>
              <Bullet>
                <span>A <b>security group</b> element.</span>
              </Bullet>
            </Bullets>
            <DiagramFrame>
              <PatternDiagram />
            </DiagramFrame>
          </Doc>
          <ScrollTrack $vertical>
            <ScrollButton aria-label="Up">
              <Triangle dir="up" />
            </ScrollButton>
            <ScrollThumb $size={203} />
            <ScrollGap $size={314} />
            <ScrollButton aria-label="Down">
              <Triangle dir="down" />
            </ScrollButton>
          </ScrollTrack>
        </Split>
      </DialogBody>
      <TabStrip>
        <ActiveTab>Model Builder</ActiveTab>
        <OtherTab>Diagram Builder</OtherTab>
      </TabStrip>
    </Dialog>
  );
};

const BrowserPanel = () => (
  <Panel $width={264}>
    <PanelHeader>
      <PanelTitle>Browser</PanelTitle>
      <Triangle color="#666" />
      <Pin />
      <Cross />
    </PanelHeader>
    <Toolbar>
      <Folder isNew />
      <Folder />
      <StructureIcon />
      <ToolDivider />
      <MoveArrow />
      <MoveArrow down />
      <ToolDivider />
      <TouchIcon />
      <MenuIcon />
      <Triangle size={6} />
      <Spacer />
      <Triangle dir="right" color="#8482dc" size={14} />
    </Toolbar>
    <PanelTabs>
      <PanelTab $active>Project</PanelTab>
      <PanelTab>Context</PanelTab>
      <PanelTab>Diagram</PanelTab>
      <PanelTab>Resources</PanelTab>
    </PanelTabs>
    <Tree>
      <TreeRow $indent={10}>
        <TreeIcon $wide>
          <ModelIcon />
        </TreeIcon>
        Model
      </TreeRow>
      <TreeRow $indent={15} $selected>
        <TreeArrow>
          <HollowTriangle dir="down" />
        </TreeArrow>
        <TreeIcon $wide>
          <PackageIcon />
        </TreeIcon>
        «perspective workspace» Package1
      </TreeRow>
      <TreeRow $indent={54}>
        <TreeIcon $wide>
          <StructureIcon />
        </TreeIcon>
        Package1
      </TreeRow>
      {elements.map(([name, hasChildren]) => (
        <TreeRow key={name} $indent={39}>
          <TreeArrow>{hasChildren && <ChevronRight />}</TreeArrow>
          <TreeIcon>
            <ElementIcon />
          </TreeIcon>
          {name}
        </TreeRow>
      ))}
      <TreeRow $indent={32}>
        <TreeIcon $wide>
          <PackageIcon />
        </TreeIcon>
        Package2
      </TreeRow>
    </Tree>
    <ScrollTrack>
      <ScrollButton aria-label="Left">
        <Triangle dir="left" />
      </ScrollButton>
      <ScrollGap $size={7} />
      <ScrollThumb $size={211} />
      <ScrollGap $size={9} />
      <ScrollButton aria-label="Right">
        <Triangle dir="right" />
      </ScrollButton>
    </ScrollTrack>
  </Panel>
);

const ToolboxPanel = () => (
  <Panel $width={203}>
    <PanelHeader>
      <PanelTitle>Toolbox</PanelTitle>
    </PanelHeader>
    <ToolboxSearch placeholder="Search" aria-label="Search toolbox" />
    <ToolSection>
      <Triangle dir="corner" />
      Model
    </ToolSection>
    <ToolItems>
      {tools.map(([kind, letter], i) => (
        <ToolItem key={i}>
          <ToolElementIcon kind={kind} />
          {letter}
        </ToolItem>
      ))}
    </ToolItems>
    <ToolSection>
      <HollowTriangle />
      Internal
    </ToolSection>
    <ToolSection>
      <HollowTriangle />
      Ribbon
    </ToolSection>
  </Panel>
);

const App = () => (
  <>
    <GlobalStyle />
    <Page>
      <TitleBar>
        <AppButton aria-label="Application menu">
          <Knot size={16} back="#dfe3ff" color="#1a1ae0" hole="#fff" />
          <Triangle color="#fff" size={6} />
        </AppButton>
        <MainTabs>
          <MainTab $active>Start</MainTab>
          <MainTab>Specialize</MainTab>
          <MainTab>Settings</MainTab>
        </MainTabs>
        <FindBox>
          <Bulb />
          <FindInput placeholder="Find Command..." aria-label="Find Command" />
        </FindBox>
      </TitleBar>
      <Ribbon>
        {ribbon.map((group) => (
          <Group key={group.label} $width={group.width}>
            <GroupBody $indent={group.indent}>
              {group.items.map((item, i) => (
                <RibbonItem key={i} item={item} />
              ))}
            </GroupBody>
            <GroupLabel>{group.label}</GroupLabel>
          </Group>
        ))}
      </Ribbon>
      <Crumbs>
        <RoundArrow dir="left" color="#0b7fbf" />
        <RoundArrow dir="right" color="#74b4d8" />
        <CrumbTrail>
          <Triangle dir="right" color="#333" />
          <RootCrumb href="#root">/</RootCrumb>
          <Triangle dir="right" color="#333" />
          <Crumb href="#model">Model</Crumb>
          <Triangle dir="right" color="#333" />
          <Crumb href="#package1">Package1</Crumb>
          <Triangle dir="right" color="#333" />
        </CrumbTrail>
      </Crumbs>
      <Workspace>
        <BrowserPanel />
        <ToolboxPanel />
        <CanvasArea>
          <CanvasRow>
            <Canvas />
            <ScrollTrack $vertical>
              <Spacer />
              <ScrollButton aria-label="Scroll down">
                <Triangle />
              </ScrollButton>
            </ScrollTrack>
          </CanvasRow>
          <CanvasScroll>
            <ScrollButton aria-label="Scroll left">
              <Triangle dir="left" />
            </ScrollButton>
            <ScrollGap $size={3} />
            <ScrollThumb $size={586} />
            <ScrollGap $size={359} />
            <ScrollButton aria-label="Scroll right">
              <Triangle dir="right" />
            </ScrollButton>
          </CanvasScroll>
        </CanvasArea>
        <Panel $width={57}>
          <SideHeader>
            <PanelTitle>er</PanelTitle>
          </SideHeader>
          <SideTools>
            <Triangle size={6} />
          </SideTools>
          <SideGap />
          <SideRows>
            {sideRows.map((row, i) => (
              <SideRow key={i} $fill={row.fill} $bold={row.bold}>
                {row.text}
              </SideRow>
            ))}
          </SideRows>
        </Panel>
      </Workspace>
      <ModelBuilderDialog />
    </Page>
  </>
);

export default App;
